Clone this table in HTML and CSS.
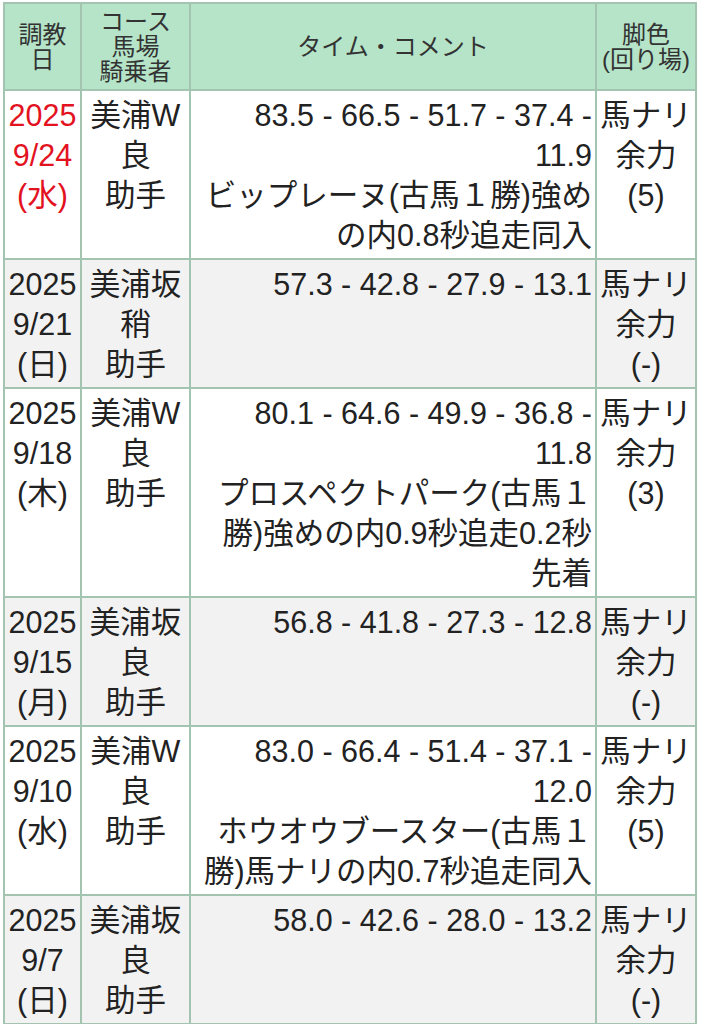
FILE: index.html
```html
<!DOCTYPE html>
<html lang="ja">
<head>
<meta charset="utf-8">
<link rel="stylesheet" href="styles.css">
</head>
<body>
<table class="chokyo">
<colgroup>
<col class="c-date"><col class="c-course"><col class="c-time"><col class="c-leg">
</colgroup>
<thead>
<tr>
<th>調教<br>日</th>
<th>コース<br>馬場<br>騎乗者</th>
<th>タイム・コメント</th>
<th>脚色<br>(回り場)</th>
</tr>
</thead>
<tbody>
<tr>
<td class="date red">2025<br>9/24<br>(水)</td>
<td class="course">美浦W<br>良<br>助手</td>
<td class="time">83.5 - 66.5 - 51.7 - 37.4 -<br>11.9<br>ビップレーヌ(古馬１勝)強め<br>の内0.8秒追走同入</td>
<td class="leg">馬ナリ<br>余力<br>(5)</td>
</tr>
<tr class="alt">
<td class="date">2025<br>9/21<br>(日)</td>
<td class="course">美浦坂<br>稍<br>助手</td>
<td class="time">57.3 - 42.8 - 27.9 - 13.1</td>
<td class="leg">馬ナリ<br>余力<br>(-)</td>
</tr>
<tr>
<td class="date">2025<br>9/18<br>(木)</td>
<td class="course">美浦W<br>良<br>助手</td>
<td class="time">80.1 - 64.6 - 49.9 - 36.8 -<br>11.8<br>プロスペクトパーク(古馬１<br>勝)強めの内0.9秒追走0.2秒<br>先着</td>
<td class="leg">馬ナリ<br>余力<br>(3)</td>
</tr>
<tr class="alt">
<td class="date">2025<br>9/15<br>(月)</td>
<td class="course">美浦坂<br>良<br>助手</td>
<td class="time">56.8 - 41.8 - 27.3 - 12.8</td>
<td class="leg">馬ナリ<br>余力<br>(-)</td>
</tr>
<tr>
<td class="date">2025<br>9/10<br>(水)</td>
<td class="course">美浦W<br>良<br>助手</td>
<td class="time">83.0 - 66.4 - 51.4 - 37.1 -<br>12.0<br>ホウオウブースター(古馬１<br>勝)馬ナリの内0.7秒追走同入</td>
<td class="leg">馬ナリ<br>余力<br>(5)</td>
</tr>
<tr class="alt">
<td class="date">2025<br>9/7<br>(日)</td>
<td class="course">美浦坂<br>良<br>助手</td>
<td class="time">58.0 - 42.6 - 28.0 - 13.2</td>
<td class="leg">馬ナリ<br>余力<br>(-)</td>
</tr>
</tbody>
</table>
</body>
</html>
```
FILE: styles.css
```css
html, body {
  margin: 0;
  padding: 0;
  background: #ffffff;
}
body {
  font-family: "Liberation Sans", Arial, "Noto Sans CJK JP", sans-serif;
  color: #222222;
}
.chokyo {
  margin: 2px 0 0 3px;
  width: 692px;
  table-layout: fixed;
  border-collapse: collapse;
  border: 2px solid #a3c4b1;
}
.c-date { width: 77px; }
.c-course { width: 109px; }
.c-time { width: 406px; }
.c-leg { width: 100px; }
.chokyo th,
.chokyo td {
  border: 2px solid #a3c4b1;
  white-space: nowrap;
}
.chokyo th {
  background: #b5e4c8;
  font-weight: normal;
  font-size: 24px;
  line-height: 25px;
  color: #333333;
  text-align: center;
  vertical-align: middle;
  padding: 5px 1px 5px 1px;
}
.chokyo td {
  font-size: 30.5px;
  line-height: 40px;
  vertical-align: top;
  padding: 4px 3px 3px 3px;
  background: #ffffff;
}
.chokyo tr.alt td {
  background: #f2f2f2;
}
.chokyo td.date,
.chokyo td.course {
  text-align: center;
  padding-left: 0;
  padding-right: 0;
}
.chokyo td.time {
  text-align: right;
}
.chokyo td.leg {
  text-align: center;
  padding-left: 0;
  padding-right: 0;
}
.chokyo td.red {
  color: #e3121f;
}
```
